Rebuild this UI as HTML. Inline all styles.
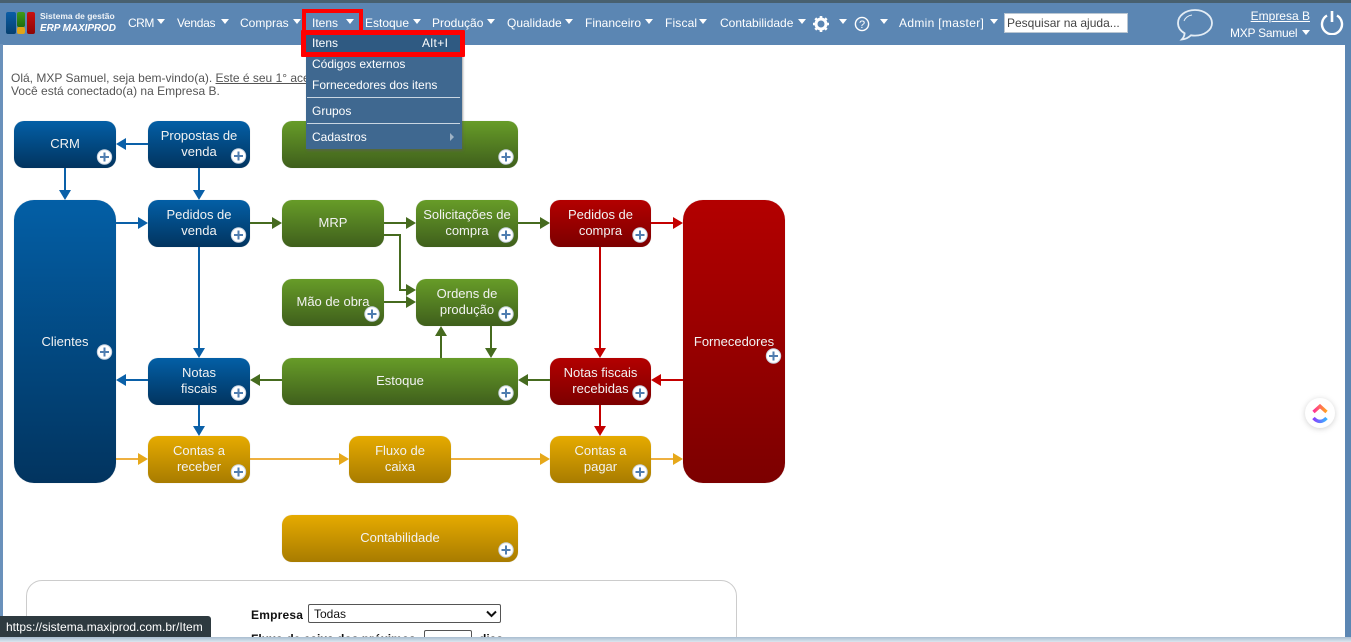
<!DOCTYPE html>
<html lang="pt-BR"><head><meta charset="utf-8"><title>ERP MAXIPROD</title>
<style>
html,body{margin:0;padding:0;width:1351px;height:642px;overflow:hidden;background:#fff}
body{position:relative;font-family:"Liberation Sans",sans-serif;font-size:12px}
.a{position:absolute;white-space:nowrap}
.n{position:absolute;top:16px;color:#fff;font-size:12px;line-height:14px;white-space:nowrap}
.t{position:absolute;width:0;height:0;border-left:4.5px solid transparent;border-right:4.5px solid transparent;border-top:5px solid #fff}
.b{position:absolute;display:flex;align-items:center;justify-content:center;text-align:center;color:#f2f2f2;font-size:13px;line-height:16px;box-sizing:border-box;border-radius:10px;padding-bottom:1px;box-shadow:0 0 1px rgba(120,120,120,.35)}
.bl{background-image:linear-gradient(#035fa6,#02345f)}
.gr{background-image:linear-gradient(#679c28,#3f5f1c)}
.rd{background-image:linear-gradient(#b30000,#7c0000)}
.or{background-image:linear-gradient(#e6ab00,#a87c00)}
.m{position:absolute;left:312px;color:#fff;font-size:12px;line-height:14px;white-space:nowrap}
.s{position:absolute;left:307px;width:153px;height:1px;background:#c9d6e2}
</style></head><body>
<div class="a" style="left:0;top:0;width:1351px;height:45px;background:#5b86b3"></div>
<div class="a" style="left:0;top:0;width:1351px;height:3px;background:#48606f"></div>
<div class="a" style="left:0;top:44px;width:3px;height:598px;background:#6a91bb"></div>
<div class="a" style="left:1345px;top:44px;width:6px;height:598px;background:#5b86b3"></div>

<div class="a" style="left:6px;top:12px;width:10px;height:22px;background:linear-gradient(#0a5da6,#06406f);border-radius:2px"></div>
<div class="a" style="left:17px;top:12px;width:8px;height:15px;background:linear-gradient(#3f9a16,#1f6b10);border-radius:2px"></div>
<div class="a" style="left:17px;top:27px;width:8px;height:7px;background:#e0a417;border-radius:2px"></div>
<div class="a" style="left:27px;top:12px;width:8px;height:22px;background:linear-gradient(#c80f0f,#8c0505);border-radius:2px"></div>
<div class="a" style="left:40px;top:11px;color:#f0f4f8;font-size:8.5px;font-weight:bold;line-height:11px">Sistema de gestão</div>
<div class="a" style="left:40px;top:22px;color:#fff;font-size:10px;font-weight:bold;font-style:italic;line-height:13px;letter-spacing:-.08px">ERP MAXIPROD</div>

<div class="n" style="left:128px;letter-spacing:-.5px">CRM</div><div class="t" style="left:157px;top:19px"></div>
<div class="n" style="left:177px;letter-spacing:-.3px">Vendas</div><div class="t" style="left:221px;top:19px"></div>
<div class="n" style="left:240px">Compras</div><div class="t" style="left:293px;top:19px"></div>
<div class="n" style="left:312px">Itens</div><div class="t" style="left:346px;top:19px"></div>
<div class="n" style="left:365px">Estoque</div><div class="t" style="left:413px;top:19px"></div>
<div class="n" style="left:432px">Produção</div><div class="t" style="left:487px;top:19px"></div>
<div class="n" style="left:507px">Qualidade</div><div class="t" style="left:565px;top:19px"></div>
<div class="n" style="left:585px">Financeiro</div><div class="t" style="left:645px;top:19px"></div>
<div class="n" style="left:665px;letter-spacing:.15px">Fiscal</div><div class="t" style="left:699px;top:19px"></div>
<div class="n" style="left:720px">Contabilidade</div><div class="t" style="left:798px;top:19px"></div>
<svg class="a" style="left:812px;top:15px" width="18" height="18" viewBox="0 0 18 18"><circle cx="9" cy="9" r="5" fill="none" stroke="#fff" stroke-width="3"/><g stroke="#fff" stroke-width="2.6"><path d="M9 1v3M9 14v3M1 9h3M14 9h3M3.3 3.3l2.2 2.2M12.5 12.5l2.2 2.2M3.3 14.7l2.2-2.2M12.5 5.5l2.2-2.2"/></g></svg>
<div class="t" style="left:839px;top:19px"></div>
<svg class="a" style="left:854px;top:16px" width="16" height="16" viewBox="0 0 16 16"><circle cx="8" cy="8" r="6.6" fill="none" stroke="#fff" stroke-width="1.4"/><text x="8" y="11.8" text-anchor="middle" font-family="Liberation Sans" font-size="11" fill="#fff">?</text></svg>
<div class="t" style="left:880px;top:19px"></div>
<div class="n" style="left:899px;letter-spacing:.32px">Admin [master]</div><div class="t" style="left:990px;top:19px"></div>
<div class="a" style="left:1004px;top:13px;width:124px;height:20px;box-sizing:border-box;background:#fff;border:1px solid #b9c6d2;color:#444;font-size:12px;line-height:18px;padding-left:2px;overflow:hidden">Pesquisar na ajuda...</div>
<svg class="a" style="left:1176px;top:8px" width="38" height="34" viewBox="0 0 38 34"><path d="M19 2C9.5 2 2 7.7 2 15c0 4.2 2.6 8 6.6 10.300C8.400 28 7.300 30 5.800 31.500c3.700-.3 7-2 9.200-4.200 1.300.2 2.600.3 4 .3 9.400 0 17-5.600 17-12.600S28.400 2 19 2z" fill="none" stroke="#e4edf5" stroke-width="1.800"/><path d="M8 13c1-3 4-5.500 8-6" fill="none" stroke="#e4edf5" stroke-width="1"/></svg>
<div class="a" style="right:41px;top:9px;color:#fff;font-size:12px;line-height:14px;text-decoration:underline">Empresa B</div>
<div class="a" style="left:1230px;top:26px;color:#fff;font-size:12px;letter-spacing:-.25px;line-height:14px">MXP Samuel</div><div class="t" style="left:1302px;top:30px"></div>
<svg class="a" style="left:1320px;top:9px" width="24" height="26" viewBox="0 0 24 26"><path d="M7 6.500a10 10 0 1 0 10 0" fill="none" stroke="#fff" stroke-width="2.400"/><path d="M12 2v11" stroke="#fff" stroke-width="2.600" fill="none"/></svg>

<div class="a" style="left:11px;top:72px;color:#555;font-size:12px;line-height:13px">Olá, MXP Samuel, seja bem-vindo(a). <span style="text-decoration:underline">Este é seu 1° acesso</span><br>Você está conectado(a) na Empresa B.</div>

<svg class="a" style="left:0;top:0" width="800" height="500" viewBox="0 0 800 500" fill="none" stroke-width="2">
<g stroke="#0a60a8"><path d="M148 144H124M65 168V192M199 168V192M116 223H140M199 247V350M148 380H124M199 405V428"/></g>
<g fill="#0a60a8"><path d="M116 144l10-6v12zM65 200l-6-10h12zM199 200l-6-10h12zM148 223l-10-6v12zM199 358l-6-10h12zM116 380l10-6v12zM199 436l-6-10h12z"/></g>
<g stroke="#466b1f"><path d="M250 223H274M384 223H408M518 223H542M384 235H400V290H408M384 302H408M441 358V334M491 326V350M550 380H526M282 380H258"/></g>
<g fill="#466b1f"><path d="M282 223l-10-6v12zM416 223l-10-6v12zM550 223l-10-6v12zM416 290l-10-6v12zM416 302l-10-6v12zM441 326l-6 10h12zM491 358l-6-10h12zM518 380l10-6v12zM250 380l10-6v12z"/></g>
<g stroke="#c40000"><path d="M651 223H675M600 247V350M683 380H659M600 405V428"/></g>
<g fill="#c40000"><path d="M683 223l-10-6v12zM600 358l-6-10h12zM651 380l10-6v12zM600 436l-6-10h12z"/></g>
<g stroke="#eeb040"><path d="M116 459H140M250 459H341M451 459H542M651 459H675"/></g>
<g fill="#e6a81a"><path d="M148 459l-10-6v12zM349 459l-10-6v12zM550 459l-10-6v12zM683 459l-10-6v12z"/></g>
</svg>

<div class="b bl" style="left:14px;top:121px;width:102px;height:47px">CRM</div>
<div class="b bl" style="left:148px;top:121px;width:102px;height:47px">Propostas de<br>venda</div>
<div class="b gr" style="left:282px;top:121px;width:236px;height:47px"></div>
<div class="b bl" style="left:14px;top:200px;width:102px;height:283px;border-radius:20px;padding-bottom:0">Clientes</div>
<div class="b bl" style="left:148px;top:200px;width:102px;height:47px">Pedidos de<br>venda</div>
<div class="b gr" style="left:282px;top:200px;width:102px;height:47px">MRP</div>
<div class="b gr" style="left:416px;top:200px;width:102px;height:47px">Solicitações de<br>compra</div>
<div class="b rd" style="left:550px;top:200px;width:101px;height:47px">Pedidos de<br>compra</div>
<div class="b rd" style="left:683px;top:200px;width:102px;height:283px;border-radius:20px;padding-bottom:0">Fornecedores</div>
<div class="b gr" style="left:282px;top:279px;width:102px;height:47px">Mão de obra</div>
<div class="b gr" style="left:416px;top:279px;width:102px;height:47px">Ordens de<br>produção</div>
<div class="b bl" style="left:148px;top:358px;width:102px;height:47px">Notas<br>fiscais</div>
<div class="b gr" style="left:282px;top:358px;width:236px;height:47px">Estoque</div>
<div class="b rd" style="left:550px;top:358px;width:101px;height:47px">Notas fiscais<br>recebidas</div>
<div class="b or" style="left:148px;top:436px;width:102px;height:47px">Contas a<br>receber</div>
<div class="b or" style="left:349px;top:436px;width:102px;height:47px">Fluxo de<br>caixa</div>
<div class="b or" style="left:550px;top:436px;width:101px;height:47px">Contas a<br>pagar</div>
<div class="b or" style="left:282px;top:515px;width:236px;height:47px">Contabilidade</div>

<svg class="a" style="left:0;top:0" width="800" height="570" viewBox="0 0 800 570">
<defs><g id="p"><circle r="7.200" fill="#fff" stroke="#c9d4e2" stroke-width="1"/><path d="M-4.500 0H4.500M0-4.500V4.500" stroke="#4f7db0" stroke-width="2"/></g></defs>
<use href="#p" x="104.500" y="157"/><use href="#p" x="238.500" y="156"/><use href="#p" x="506" y="157"/>
<use href="#p" x="104.500" y="352"/><use href="#p" x="238.500" y="235"/><use href="#p" x="506" y="235"/>
<use href="#p" x="640" y="235"/><use href="#p" x="773.500" y="356"/><use href="#p" x="372" y="314"/>
<use href="#p" x="506" y="314"/><use href="#p" x="238.500" y="393"/><use href="#p" x="506" y="393"/>
<use href="#p" x="640" y="393"/><use href="#p" x="238.500" y="472"/><use href="#p" x="640" y="472"/>
<use href="#p" x="506" y="550"/>
</svg>

<div class="a" style="left:26px;top:580px;width:711px;height:90px;box-sizing:border-box;border:1px solid #ccc;border-radius:16px"></div>
<div class="a" style="left:251px;top:608px;color:#111;font-size:12px;font-weight:bold;letter-spacing:.2px;line-height:14px">Empresa</div>
<div class="a" style="left:308px;top:604px;width:193px;height:19px;box-sizing:border-box;border:1px solid #555;border-radius:2px;background:#fff;color:#111;font-size:12px;line-height:18px;padding-left:5px">Todas
<svg style="position:absolute;right:3px;top:5px" width="11" height="8" viewBox="0 0 11 8"><path d="M1 1.500L5.500 6 10 1.500" fill="none" stroke="#111" stroke-width="2"/></svg></div>
<div class="a" style="left:251px;top:632px;color:#111;font-size:12px;font-weight:bold;line-height:14px">Fluxo de caixa dos próximos</div>
<div class="a" style="left:424px;top:630px;width:48px;height:20px;box-sizing:border-box;border:1px solid #555;border-radius:2px;background:#fff"></div>
<div class="a" style="left:479px;top:632px;color:#111;font-size:12px;font-weight:bold;line-height:14px">dias</div>

<svg class="a" style="left:1305px;top:398px;overflow:visible" width="30" height="30" viewBox="0 0 30 30"><circle cx="15" cy="15" r="15" fill="#fff" style="filter:drop-shadow(0 1px 3px rgba(0,0,0,.18))"/>
<defs><linearGradient id="u" x1="0" x2="1" y1="0" y2="0"><stop offset="0" stop-color="#ff2f9a"/><stop offset="1" stop-color="#ffa51f"/></linearGradient><linearGradient id="d" x1="0" x2="1" y1="0" y2="0"><stop offset="0" stop-color="#8a3cff"/><stop offset="1" stop-color="#38b6ff"/></linearGradient></defs>
<path d="M8.500 14L15 8.200 21.500 14" fill="none" stroke="url(#u)" stroke-width="3.400"/><path d="M8.500 20c4 4.500 9 4.500 13 0" fill="none" stroke="url(#d)" stroke-width="3.400"/></svg>

<div class="a" style="left:306px;top:34px;width:156px;height:115px;background:#3f6890;box-shadow:1px 2px 2px rgba(90,90,90,.55)"></div>
<div class="a" style="left:305px;top:35px;width:155px;height:17px;background:#2f5a82"></div>
<div class="m" style="top:36px">Itens</div><div class="a" style="left:422px;top:36px;color:#fff;font-size:12px;letter-spacing:.4px;line-height:14px">Alt+I</div>
<div class="m" style="top:57px">Códigos externos</div>
<div class="m" style="top:78px">Fornecedores dos itens</div>
<div class="s" style="top:97px"></div>
<div class="m" style="top:104px">Grupos</div>
<div class="s" style="top:123px"></div>
<div class="m" style="top:130px">Cadastros</div>
<div class="a" style="left:450px;top:133px;width:0;height:0;border-top:4px solid transparent;border-bottom:4px solid transparent;border-left:4px solid #9fb3c6"></div>

<div class="a" style="left:302px;top:9px;width:61px;height:25px;box-sizing:border-box;border:4px solid #f00;border-bottom:3px solid #f00"></div>
<div class="a" style="left:301px;top:30px;width:164px;height:27px;box-sizing:border-box;border:5px solid #f00;border-radius:1px"></div>

<div class="a" style="left:0;top:637px;width:1351px;height:5px;background:linear-gradient(#a9bdd0,#dbe6ef)"></div>
<div class="a" style="left:0;top:616px;width:211px;height:21px;background:#2e3a40;border-radius:0 3px 0 0;color:#fff;font-size:12px;line-height:22px;padding-left:6px;box-sizing:border-box">https://sistema.maxiprod.com.br/Item</div>
</body></html>
